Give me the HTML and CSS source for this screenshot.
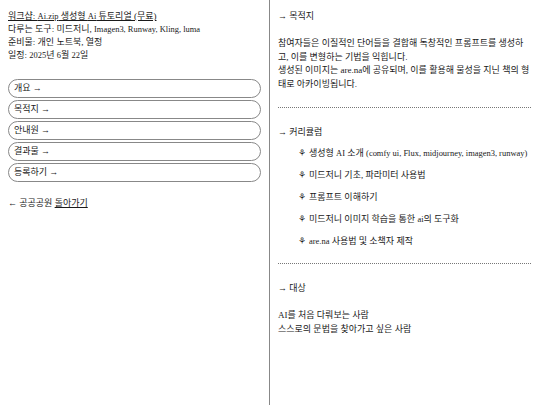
FILE: index.html
```html
<!DOCTYPE html>
<html lang="ko">
<head>
    <meta charset="UTF-8">
    <meta name="viewport" content="width=device-width, initial-scale=1.0">
    <link rel="stylesheet" href="styles.css">
</head>
<body>
    <div class="wrap">
        <div class="left">
            <div class="info">
                <p><a href="#">워크샵: <span lang="en">Ai.zip</span> 생성형 <span lang="en">Ai</span> 튜토리얼 (무료)</a></p>
                <p>다루는 도구: 미드저니, <span lang="en">Imagen3, Runway, Kling, luma</span></p>
                <p>준비물: 개인 노트북, 열정</p>
                <p>일정: <span lang="en">2025</span>년 <span lang="en">6</span>월 <span lang="en">22</span>일</p>
            </div>

            <div class="menu">
                <button class="pill">개요 →</button>
                <button class="pill">목적지 →</button>
                <button class="pill">안내원 →</button>
                <button class="pill">결과물 →</button>
                <button class="pill">등록하기 →</button>
            </div>

            <p class="back">← 공공공원 <a href="#">돌아가기</a></p>
        </div>

        <div class="right">
            <div class="section">
                <p class="head">→ 목적지</p>
                <p class="text">참여자들은 이질적인 단어들을 결합해 독창적인 프롬프트를 생성하고, 이를 변형하는 기법을 익힙니다.<br>
                생성된 이미지는 are.na에 공유되며, 이를 활용해 물성을 지닌 책의 형태로 아카이빙됩니다.</p>
            </div>

            <hr class="dots">

            <div class="section">
                <p class="head">→ 커리큘럼</p>
                <ul class="curri">
                    <li>생성형 <span lang="en">AI</span> 소개 <span lang="en">(comfy ui, Flux, midjourney, imagen3, runway)</span></li>
                    <li>미드저니 기초, 파라미터 사용법</li>
                    <li>프롬프트 이해하기</li>
                    <li>미드저니 이미지 학습을 통한 <span lang="en">ai</span>의 도구화</li>
                    <li><span lang="en">are.na</span> 사용법 및 소책자 제작</li>
                </ul>
            </div>

            <hr class="dots">

            <div class="section">
                <p class="head">→ 대상</p>
                <p class="text">AI를 처음 다뤄보는 사람<br>
                스스로의 문법을 찾아가고 싶은 사람</p>
            </div>
        </div>
    </div>
</body>
</html>
```

FILE: styles.css
```css
html, body {
    margin: 0;
    height: 100%;
}

body {
    font-family: "Liberation Serif", "Noto Sans CJK KR", serif;
    font-size: 9px;
    line-height: 13px;
    color: #1a1a1a;
    background: white;
}

p {
    margin: 0;
}

a {
    color: inherit;
}

/* latin runs sit a little smaller next to the hangul */
:lang(en) {
    font-size: 0.94em;
    line-height: 1;
}

.wrap {
    display: flex;
    height: 100%;
}

.left {
    width: 253px;
    padding: 10px 8px;
    border-right: 1px solid #888;
    flex-shrink: 0;
}

.menu {
    display: flex;
    flex-direction: column;
    gap: 2px;
    margin-top: 17px; /* space under the info lines */
}

.pill {
    font: inherit;
    color: inherit;
    text-align: left;
    background: white;
    border: 1px solid #888;
    border-radius: 10px;
    height: 19px;
    padding: 0 5px;
}

.back {
    margin-top: 15px;
}

.right {
    flex: 1;
    padding: 10px 9px 10px 8px;
}

.text {
    margin-top: 14px;
    line-height: 13.7px;
}

.dots {
    border: none;
    border-top: 1px dotted #777;
    margin: 15px 0 18px;
}

.curri {
    list-style: none;
    margin: 8px 0 0;
    padding-left: 20px;
}

.curri li {
    margin-bottom: 9px;
}

.curri li::before {
    content: "⚘";
    margin-right: 3px;
}
```
